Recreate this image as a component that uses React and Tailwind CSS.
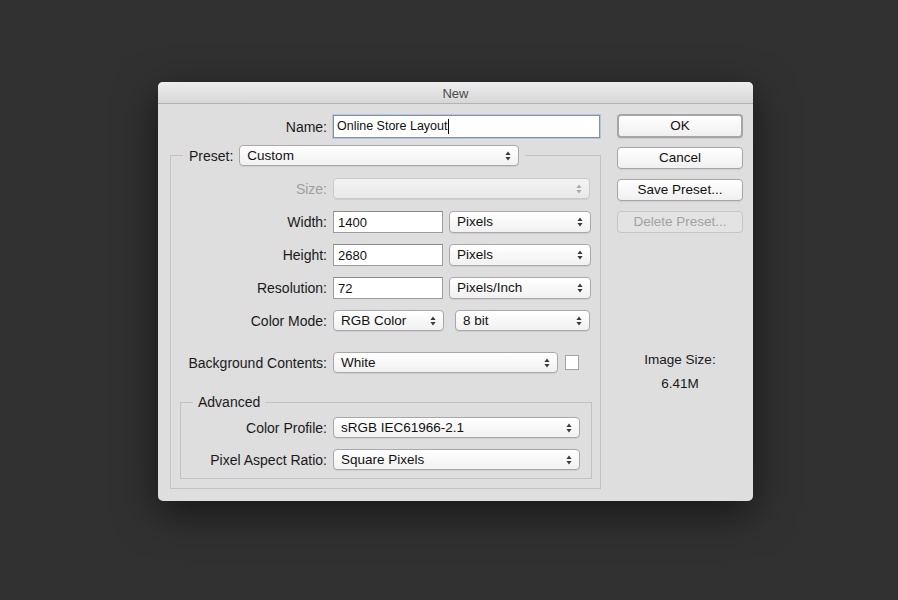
import React from 'react';

// up/down stepper glyph used on popup menus
function Arrows({ dim }) {
  return (
    <svg width="6" height="10" viewBox="0 0 6 10">
      <path d="M3 0.5 L5.6 4 H0.4 Z M3 9.5 L5.6 6 H0.4 Z" fill={dim ? '#a9a9a9' : '#3a3a3a'} />
    </svg>
  );
}

function Popup({ value, className = '', dim }) {
  return (
    <div
      className={`flex items-center justify-between pl-[7px] pr-[7px] rounded-[4px] border text-[13.5px] leading-none shadow-[0_1px_0_rgba(0,0,0,0.07)] ${
        dim
          ? 'border-[#cbcbcb] bg-linear-to-b from-[#f3f3f3] to-[#e9e9e9]'
          : 'border-[#a9a9a9] bg-linear-to-b from-white to-[#f1f1f1] text-[#111]'
      } ${className}`}
    >
      <span>{value}</span>
      <Arrows dim={dim} />
    </div>
  );
}

function Field({ value, className = '' }) {
  return (
    <div className={`flex items-center pl-[4px] bg-white border border-[#9c9c9c] border-t-[#8a8a8a] text-[13px] text-[#111] leading-none ${className}`}>
      {value}
    </div>
  );
}

function Row({ label, width, dim, className = '', children }) {
  return (
    <div className={`flex items-center ${className}`}>
      <div className={`text-right text-[14px] leading-none ${dim ? 'text-[#a0a0a0]' : 'text-[#1a1a1a]'}`} style={{ width }}>
        {label}
      </div>
      <div className="flex items-center ml-[6px]">{children}</div>
    </div>
  );
}

function Button({ children, className = '', disabled }) {
  return (
    <div
      className={`flex items-center justify-center rounded-[4px] text-[13.5px] leading-none ${
        disabled
          ? 'border border-[#c6c6c6] bg-[#e3e3e3] text-[#a2a2a2]'
          : 'border border-[#a5a5a5] bg-linear-to-b from-white to-[#f0f0f0] text-[#111] shadow-[0_1px_0_rgba(0,0,0,0.06)]'
      } ${className}`}
    >
      {children}
    </div>
  );
}

export default function App() {
  return (
    <div className="w-[898px] h-[600px] bg-[#313131] pl-[158px] pt-[82px] font-['Liberation_Sans',Arial,sans-serif]">
      <div className="w-[595px] h-[419px] rounded-[5px] overflow-hidden bg-[#dedede] shadow-[0_12px_40px_rgba(0,0,0,0.55)]">
        <div className="h-[22px] border-b border-[#b3b3b3] bg-linear-to-b from-[#ededed] to-[#d7d7d7] text-center text-[13px] leading-[23px] text-[#4a4a4a]">
          New
        </div>

        <div className="flex">
          {/* form column */}
          <div className="w-[443px]">
            <div className="flex items-center mt-[11px]">
              <div className="w-[169px] text-right text-[14px] leading-none text-[#1a1a1a]">Name:</div>
              <div className="ml-[6px] w-[267px] h-[23px] flex items-center pl-[3px] bg-white border border-[#8f8f8f] shadow-[0_0_0_1px_#a9c8ee] text-[12.5px] text-[#111] leading-none">
                Online Store Layout
                <span className="w-px h-[15px] bg-black" />
              </div>
            </div>

            <fieldset className="mt-[7px] ml-[12px] w-[431px] border border-[#c3c3c3] pb-[9px]">
              <legend className="ml-[12px] px-[6px]">
                <div className="flex items-center">
                  <span className="text-[14px] leading-none text-[#1a1a1a]">Preset:</span>
                  <Popup value="Custom" className="ml-[6px] w-[280px] h-[21px]" />
                </div>
              </legend>

              <div className="flex flex-col gap-[11px] mt-[12px]">
                <Row label="Size:" width={156} dim>
                  <Popup value="" dim className="w-[257px] h-[21px]" />
                </Row>
                <Row label="Width:" width={156} className="mt-[1px]">
                  <Field value="1400" className="w-[110px] h-[22px]" />
                  <Popup value="Pixels" className="ml-[6px] w-[142px] h-[22px]" />
                </Row>
                <Row label="Height:" width={156}>
                  <Field value="2680" className="w-[110px] h-[22px]" />
                  <Popup value="Pixels" className="ml-[6px] w-[142px] h-[22px]" />
                </Row>
                <Row label="Resolution:" width={156}>
                  <Field value="72" className="w-[110px] h-[22px]" />
                  <Popup value="Pixels/Inch" className="ml-[6px] w-[142px] h-[22px]" />
                </Row>
                <Row label="Color Mode:" width={156}>
                  <Popup value="RGB Color" className="w-[111px] h-[21px]" />
                  <Popup value="8 bit" className="ml-[11px] w-[135px] h-[21px]" />
                </Row>
              </div>

              <Row label="Background Contents:" width={156} className="mt-[21px]">
                <Popup value="White" className="w-[225px] h-[21px]" />
                <div className="ml-[7px] w-[14px] h-[15px] bg-white border border-[#a3a3a3]" />
              </Row>

              <fieldset className="mt-[21px] ml-[9px] w-[412px] border border-[#c3c3c3] pb-[8px]">
                <legend className="ml-[12px] px-[5px] text-[14px] leading-[16px] text-[#1a1a1a]">Advanced</legend>
                <div className="flex flex-col gap-[11px] mt-[7px]">
                  <Row label="Color Profile:" width={146}>
                    <Popup value="sRGB IEC61966-2.1" className="w-[247px] h-[21px]" />
                  </Row>
                  <Row label="Pixel Aspect Ratio:" width={146}>
                    <Popup value="Square Pixels" className="w-[247px] h-[21px]" />
                  </Row>
                </div>
              </fieldset>
            </fieldset>
          </div>

          {/* buttons column */}
          <div className="ml-[16px] w-[126px]">
            <Button className="mt-[10px] h-[24px] border-2 border-[#767676]">OK</Button>
            <Button className="mt-[9px] h-[22px]">Cancel</Button>
            <Button className="mt-[10px] h-[22px]">Save Preset...</Button>
            <Button className="mt-[10px] h-[22px]" disabled>Delete Preset...</Button>
            <div className="mt-[119px] text-center text-[13.5px] leading-[16px] text-[#1a1a1a]">Image Size:</div>
            <div className="mt-[8px] text-center text-[13.5px] leading-[16px] text-[#1a1a1a]">6.41M</div>
          </div>
        </div>
      </div>
    </div>
  );
}
